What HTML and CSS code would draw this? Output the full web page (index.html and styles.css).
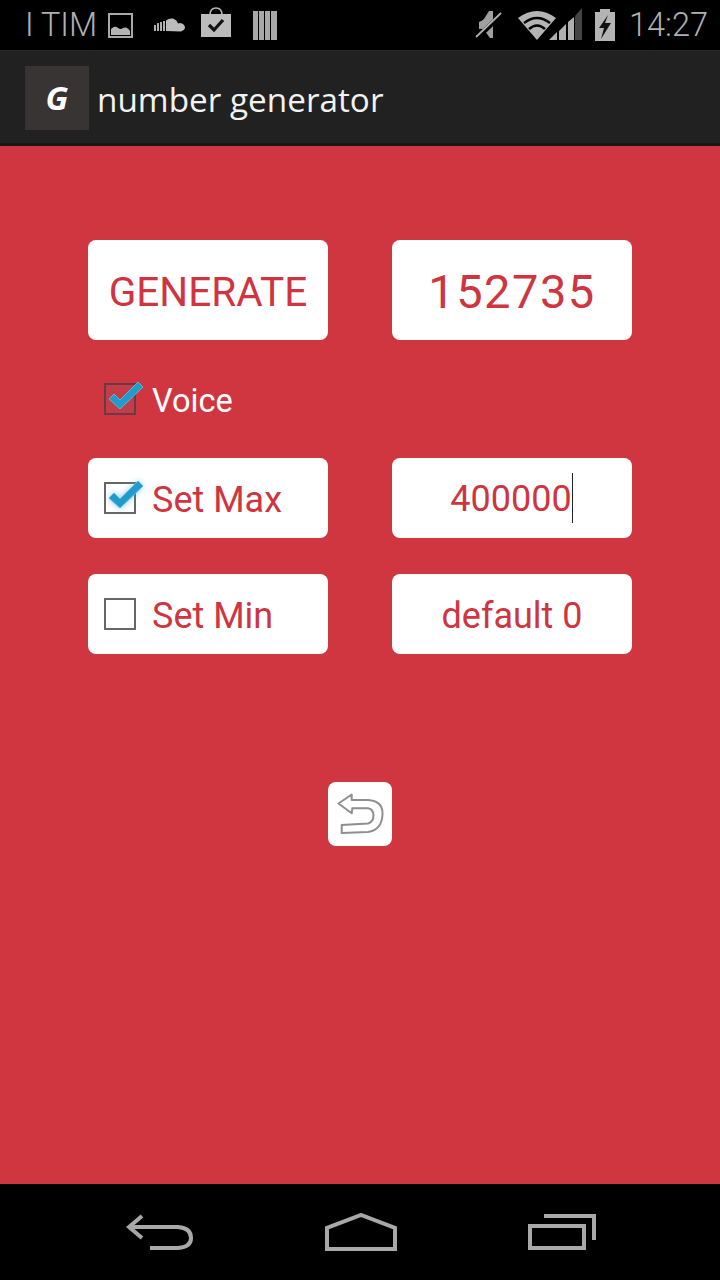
FILE: index.html
```html
<!DOCTYPE html>
<html>
<head>
<meta charset="utf-8">
<title>number generator</title>
<link rel="stylesheet" href="styles.css">
</head>
<body>
<div class="app">
  <header class="status">
    <div class="status-left">
      <span class="carrier">I TIM</span>
      <svg class="ic" width="26" height="26" viewBox="0 0 26 26"><rect x="2" y="2" width="23" height="23" fill="none" stroke="#a8a8a8" stroke-width="2"/><path d="M4 21 L4 17 Q8 13 11 16 Q14 18 16 16 Q20 14 23 19 L23 23 L4 23Z" fill="#b4b4b4"/></svg>
      <svg class="ic cloud" width="32" height="16" viewBox="0 0 32 16"><path d="M1 8v6M4 6v8M7 5v9M10 4v10" stroke="#b0b0b0" stroke-width="2"/><path d="M12 14V3.500Q15 1 19 1.500Q23 3 24 6.500Q26 5.500 28 6.500Q31 8 31 11Q30 14 27 14.500Z" fill="#bcbcbc"/></svg>
      <svg class="ic bag" width="32" height="32" viewBox="0 0 32 32"><path d="M10 8Q10 1 16 1Q22 1 22 8" fill="none" stroke="#b8b8b8" stroke-width="1.500"/><path d="M1 7H31V30H1Z" fill="#bcbcbc"/><path d="M9 18L14 23L23 13" fill="none" stroke="#111" stroke-width="3.200"/></svg>
      <svg class="ic lib" width="26" height="31" viewBox="0 0 26 31"><path d="M1 1H6V30H1ZM7 1H12V30H7ZM13 1H18V30H13ZM19 1H25V30H19Z" fill="#a8a8a8"/></svg>
    </div>
    <div class="status-right">
      <svg class="ic mute" width="28" height="30" viewBox="0 0 28 30"><path d="M4 12Q7 11 9 9L14 1H18V28H15L9 20Q7 18 4 19Z" fill="#a0a0a0"/><path d="M1 29L26 5" stroke="#000" stroke-width="5"/><path d="M1 27L26 3" stroke="#b0b0b0" stroke-width="1.800"/></svg>
      <svg class="ic signal" width="66" height="34" viewBox="0 0 66 34"><path d="M1 10Q20 -4 39 10L20 32Z" fill="#b4b4b4"/><path d="M7 15Q20 5 33 15M12 21Q20 14 28 21" fill="none" stroke="#000" stroke-width="2.500"/><path d="M32 32L40 32V24Z M42 32H49V16L42 23Z M51 32H57V9L51 14Z" fill="#b0b0b0"/><path d="M58 32H65V0L58 8Z" fill="#444"/></svg>
      <svg class="ic batt" width="22" height="33" viewBox="0 0 22 33"><path d="M6 0H16V3H21V32H1V3H6Z" fill="#b4b4b4"/><path d="M14 6L5 19H10L7 30L17 14H11Z" fill="#111"/></svg>
      <span class="clock">14:27</span>
    </div>
  </header>
  <div class="actionbar">
    <div class="logo"><span class="logo-g">G</span></div>
    <span class="title">number generator</span>
  </div>
  <main class="content">
    <div class="row row-top">
      <div class="card generate">GENERATE</div>
      <div class="card result">152735</div>
    </div>
    <div class="voice">
      <span class="box box-dark">
        <svg class="check" width="40" height="32" viewBox="0 0 40 32"><path d="M4 18L9 13L15 19L33 1L38 6L15 28Z" fill="#1f9ccc" stroke="#5fb4d8" stroke-width="1"/></svg>
      </span>
      <span class="voice-label">Voice</span>
    </div>
    <div class="row row-max">
      <div class="card field">
        <span class="box">
          <svg class="check check-glow" width="40" height="32" viewBox="0 0 40 32"><path d="M4 18L9 13L15 19L33 1L38 6L15 28Z" fill="#1f9ccc" stroke="#5fb4d8" stroke-width="1"/></svg>
        </span>
        <span>Set Max</span>
      </div>
      <div class="card value"><span class="caret">400000</span></div>
    </div>
    <div class="row row-min">
      <div class="card field">
        <span class="box"></span>
        <span>Set Min</span>
      </div>
      <div class="card value">default 0</div>
    </div>
    <div class="undo">
      <svg width="48" height="44" viewBox="0 0 48 44"><path d="M2.500 11.500L15.700 2.500V8H32Q47 9 46.500 22Q46 38 32 40L5.700 41V33L32 31.500Q37.500 30 37.500 23Q37 17 32 16.300H16.300L15.700 21.300Z" fill="none" stroke="#8f8f8f" stroke-width="2" stroke-linejoin="round"/></svg>
    </div>
  </main>
  <nav class="navbar">
    <svg width="68" height="36" viewBox="0 0 68 36"><path d="M16 2L3 13L16 24M3 13H52Q65 14 65 24Q65 33 52 34H24" fill="none" stroke="#a8a8a8" stroke-width="4"/></svg>
    <svg width="72" height="38" viewBox="0 0 72 38"><path d="M2 36V15L36 2L70 15V36Z" fill="none" stroke="#a8a8a8" stroke-width="4"/></svg>
    <svg width="68" height="36" viewBox="0 0 68 36"><path d="M2 12H56V34H2ZM16 2H66V26" fill="none" stroke="#a8a8a8" stroke-width="4"/></svg>
  </nav>
</div>
</body>
</html>
```
FILE: styles.css
```css
* { box-sizing: border-box; }
html, body { margin: 0; padding: 0; }
body { font-family: Roboto, "Liberation Sans", sans-serif; background: #000; }
.app { width: 720px; height: 1280px; display: flex; flex-direction: column; overflow: hidden; }
.status { height: 50px; background: #000; display: flex; justify-content: space-between; align-items: center; padding: 0 12px 0 25px; flex: none; }
.status-left, .status-right { display: flex; align-items: center; }
.carrier { font-size: 32.500px; color: #b0b0b0; font-weight: 300; margin-right: 10px; }
.ic { display: block; flex: none; }
.cloud { margin-left: 21px; margin-right: 14px; }
.bag { margin-right: 20px; margin-top: -4px; }
.mute { margin-right: 14px; }
.signal { margin-right: 11px; }
.batt { margin-right: 13px; }
.clock { font-size: 32.500px; color: #b0b0b0; font-weight: 300; }
.actionbar { height: 96px; flex: none; background: #212121; border-top: 1px solid #2a2a2a; border-bottom: 3px solid #161616; display: flex; align-items: center; padding-left: 25px; padding-top: 1px; }
.logo { width: 64px; height: 64px; background: #393434; display: flex; align-items: center; justify-content: center; }
.logo-g { font-family: "Open Sans", sans-serif; font-style: italic; font-weight: 700; font-size: 33px; color: #fff; }
.title { font-family: "Open Sans", sans-serif; font-size: 33.300px; color: #f2f2f2; margin-left: 8px; padding-top: 2px; }
.content { flex: 1; background: #d03640; padding-top: 94px; display: flex; flex-direction: column; align-items: center; }
.row { display: flex; gap: 64px; }
.card { width: 240px; height: 80px; background: #fff; border-radius: 8px; color: #cf3541; display: flex; align-items: center; font-size: 36px; padding-top: 4px; }
.row-top .card { height: 100px; justify-content: center; }
.generate { font-size: 40.500px; }
.result { font-size: 47px; letter-spacing: 1.500px; padding-top: 2px; }
.voice { width: 528px; height: 118px; display: flex; align-items: center; padding-left: 8px; padding-top: 4px; color: #fff; font-size: 32.500px; }
.voice-label { margin-left: 16px; margin-top: -1px; }
.box { position: relative; display: block; width: 32px; height: 32px; border: 2px solid #666; flex: none; margin-top: -4px; }
.box-dark { background: #c43c48; border-color: #6a3a44; }
.check { position: absolute; left: -1px; top: -4px; }
.check-glow { filter: drop-shadow(0 0 3px rgba(60, 170, 220, 0.6)); }
.field { padding-left: 16px; gap: 16px; }
.value { justify-content: center; }
.caret { border-right: 1px solid #222; line-height: 48px; margin-top: -4px; padding-top: 2px; margin-left: -1px; }
.row-min { margin-top: 36px; }
.undo { margin-top: 128px; width: 64px; height: 64px; background: #fff; border-radius: 8px; display: flex; align-items: center; justify-content: center; }
.navbar { height: 96px; flex: none; background: #000; display: flex; justify-content: space-between; align-items: center; padding: 0 124px 0 126px; }
```
